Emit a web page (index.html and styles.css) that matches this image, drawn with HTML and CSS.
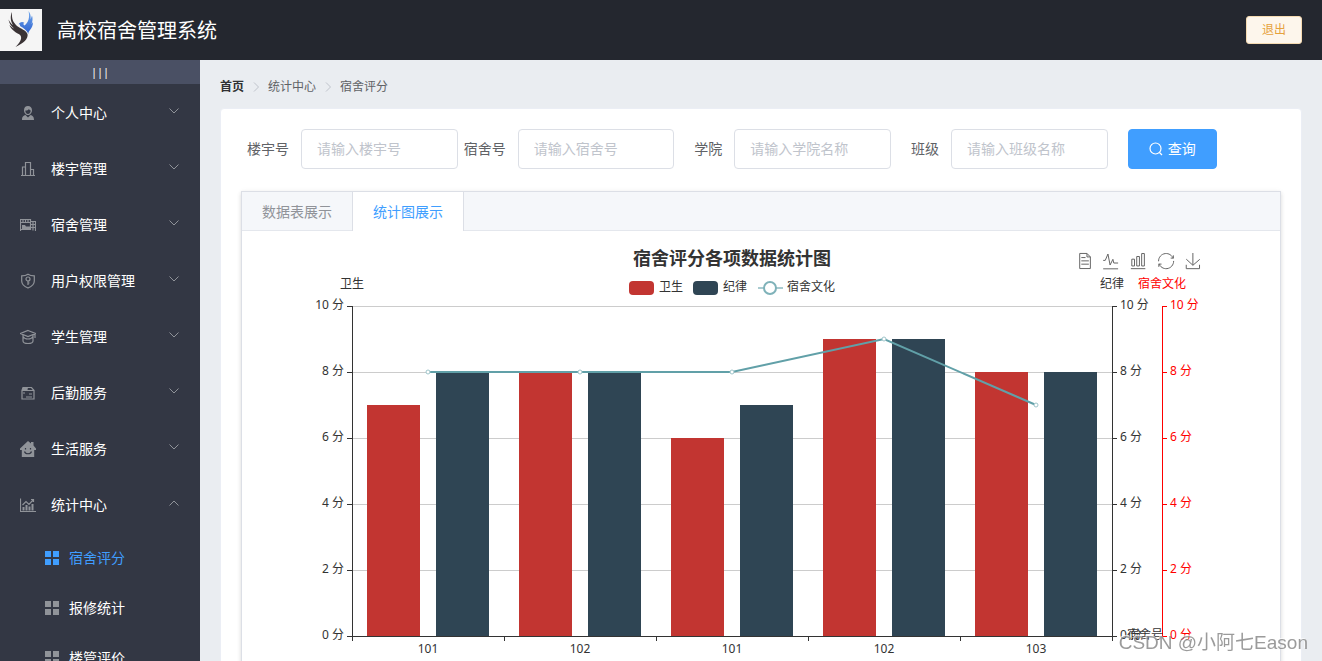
FILE: index.html
```
<!DOCTYPE html>
<html lang="zh-CN">
<head>
<meta charset="utf-8">
<title>高校宿舍管理系统</title>
<link rel="stylesheet" href="styles.css">
</head>
<body>
<svg class="defs" aria-hidden="true">
  <symbol id="down" viewBox="0 0 12 12"><path d="M1.500 3.500 6 8l4.500-4.500"/></symbol>
  <symbol id="grid" viewBox="0 0 16 16"><path d="M1 1h6v6H1zM9 1h6v6H9zM1 9h6v6H1zM9 9h6v6H9z"/></symbol>
</svg>
<div class="app">
  <header class="header">
    <div class="brand">
      <svg class="logo" viewBox="0 0 42 42" aria-hidden="true">
        <defs>
          <linearGradient id="blue" x1="0" y1="0" x2="0" y2="1"><stop offset="0" stop-color="#6ea6ec"/><stop offset="1" stop-color="#2f62cf"/></linearGradient>
        </defs>
        <rect width="42" height="42" fill="#f5f5f5"/>
        <path fill="#3a3335" d="M12 3c-.5 7 1 10 5 14 4 3 9 4 10.500 8 1 5-4 9-12 13 4-4 7-8 5-11.500-1.500-2-4-2-6.500-4.500-2.500-2-4-4-4.500-6 2 2 3 3 4.500 3.500C11 17 9 14 8.500 10.500c1.500 3 3 4.500 4.500 5.500C10.500 12.500 10 7 12 3z"/>
        <path fill="url(#blue)" d="M28.500 2c2 3 2.500 5 2 8.500l1.500-4c1 3 .5 6-.5 8.500l1.500-2c0 4-1.500 6-3 8-1 1.500-2 2.500-1.500 4-2-4-5-6-8.500-8 .5-1.500-1-2-1.500-1.500 1-2.500 4-3.500 6-1.500-1.500 0-1.500 1.500 0 2.500C28.500 13.500 30 8 28.500 2z"/>
      </svg>
      <span>高校宿舍管理系统</span>
    </div>
    <button class="logout" type="button">退出</button>
  </header>
  <div class="body">
    <aside class="sidebar">
      <button class="toggle" type="button">|||</button>
      <nav class="menu">
        <a class="item" href="#"><svg class="icon" viewBox="0 0 16 16"><path class="solid" d="M8 1c2.500 0 4 1.700 4 4.200S10.200 10 8 10 4 7.800 4 5.200 5.500 1 8 1zM2 15c0-3.500 1.500-4.500 3.500-5L8 12.500l2.500-2.500c2 .5 3.500 1.500 3.500 5z"/><path class="cut" d="M5.300 5.500c2 0 3-.5 3.600-1.500.4.900 1 1.400 1.800 1.500C10.600 7.500 9.500 9 8 9S5.300 7.500 5.300 5.500z"/></svg><span>个人中心</span><svg class="arrow"><use href="#down"/></svg></a>
        <a class="item" href="#"><svg class="icon" viewBox="0 0 16 16"><path d="M1 14.500h14M2.500 14V6h3M5.500 14V1.500h5v12.500M10.500 8.500h3V14"/></svg><span>楼宇管理</span><svg class="arrow"><use href="#down"/></svg></a>
        <a class="item" href="#"><svg class="icon" viewBox="0 0 16 16"><path d="M.5 14V2.500h10V12.500H.5M.5 5.500h10M3 2.500v3M5.500 2.500v3M8 2.500v3M10.500 4.500h5V14M10.500 7.500h5M10.500 10.500h5M13 4.500v9"/><path class="solid" d="M2 8h3l1 1.500h4V12H2z"/></svg><span>宿舍管理</span><svg class="arrow"><use href="#down"/></svg></a>
        <a class="item" href="#"><svg class="icon" viewBox="0 0 16 16"><path d="M8 1.200c2 1.300 4 1.600 6.300 1.600V8c0 3.500-2.500 5.500-6.300 7-3.800-1.500-6.300-3.500-6.300-7V2.800C4 2.800 6 2.500 8 1.200z"/><circle cx="8" cy="6" r="2"/><path d="M8 8v4M8 10h1.500"/></svg><span>用户权限管理</span><svg class="arrow"><use href="#down"/></svg></a>
        <a class="item" href="#"><svg class="icon" viewBox="0 0 16 16"><path d="M8 1.500 15.500 4.500 8 7.500.5 4.500zM3 6v6c0 1.500 2 2.500 5 2.500s5-1 5-2.500V6M3 7.500c1 2 3 2.500 5 2.500s4-.5 5-2.500M15 5v4"/></svg><span>学生管理</span><svg class="arrow"><use href="#down"/></svg></a>
        <a class="item" href="#"><svg class="icon" viewBox="0 0 16 16"><path d="M2 5.500h12v8.500H2zM2 5.500l1-3h8.500l2.500 3M3 8h2M9 9h3M6 12h6"/><path class="solid" d="M3 2.500h5L7.500 5H2z"/></svg><span>后勤服务</span><svg class="arrow"><use href="#down"/></svg></a>
        <a class="item" href="#"><svg class="icon" viewBox="0 0 16 16"><path class="solid" d="M8 0l3 2.500V1h2.500v3.500L16 7.500V9h-1.800v7H1.800V9H0V7.500z"/><path class="smile" d="M5.500 7v1.500M10.500 7v1.500M4.500 10.500c1 3 6 3 7 0"/></svg><span>生活服务</span><svg class="arrow"><use href="#down"/></svg></a>
        <a class="item" href="#"><svg class="icon" viewBox="0 0 16 16"><path d="M.5 1.500v13H16M2.500 8 6 4.500l3 3L13.500 2.500M11 2.500h2.500V5"/><path class="solid" d="M2.500 10h2v3.500h-2zM5.500 8h2v5.500h-2zM8.500 9.500h2v4h-2zM11.500 7h2v6.500h-2z"/></svg><span>统计中心</span><svg class="arrow up"><use href="#down"/></svg></a>
        <div class="submenu">
          <a class="subitem active" href="#"><svg class="gridicon"><use href="#grid"/></svg><span>宿舍评分</span></a>
          <a class="subitem" href="#"><svg class="gridicon"><use href="#grid"/></svg><span>报修统计</span></a>
          <a class="subitem" href="#"><svg class="gridicon"><use href="#grid"/></svg><span>楼管评价</span></a>
        </div>
      </nav>
    </aside>
    <main class="main">
      <nav class="crumbs">
        <a class="home" href="#">首页</a>
        <svg class="sep" viewBox="0 0 12 12"><path d="M4 1.500 8.500 6 4 10.500"/></svg>
        <span>统计中心</span>
        <svg class="sep" viewBox="0 0 12 12"><path d="M4 1.500 8.500 6 4 10.500"/></svg>
        <span>宿舍评分</span>
      </nav>
      <section class="card">
        <form class="search">
          <div class="field"><label for="building">楼宇号</label><input id="building" type="text" placeholder="请输入楼宇号"></div>
          <div class="field"><label for="room">宿舍号</label><input id="room" type="text" placeholder="请输入宿舍号"></div>
          <div class="field"><label for="college">学院</label><input id="college" type="text" placeholder="请输入学院名称"></div>
          <div class="field"><label for="class">班级</label><input id="class" type="text" placeholder="请输入班级名称"></div>
          <div class="action"><button class="query" type="button"><svg viewBox="0 0 14 14"><circle cx="6.500" cy="6.500" r="5.500"/><path d="M10.500 10.500 13 13"/></svg><span>查询</span></button></div>
        </form>
        <div class="tabs">
          <div class="tablist" role="tablist">
            <button class="tab" type="button" role="tab">数据表展示</button>
            <button class="tab current" type="button" role="tab" aria-selected="true">统计图展示</button>
          </div>
          <svg class="chart" viewBox="0 0 1038 450" role="img" aria-label="宿舍评分各项数据统计图">
            <text class="title" x="490" y="34">宿舍评分各项数据统计图</text>
            <rect class="red" x="387" y="50" width="25" height="14" rx="4"/>
            <text x="417" y="60">卫生</text>
            <rect class="navy" x="451" y="50" width="25" height="14" rx="4"/>
            <text x="481" y="60">纪律</text>
            <path class="legendline" d="M516 57h25"/><circle class="legenddot" cx="528" cy="57" r="6"/>
            <text x="545" y="60">宿舍文化</text>
            <g class="tools">
              <path transform="translate(834.600 21.900) scale(.27)" d="M17.500 17.300H33M45.400 29.500h-28M11.500 2v56H51V14.800L38.400 2H11.500zM38.400 2.200v12.700H51M45.400 41.700h-28"/>
              <path transform="translate(860 21) scale(.29)" d="M4.100 28.900h7.100l9.300-22 7.400 38 9.700-19.700 3 12.800h14.900M4.100 58h51.400"/>
              <path transform="translate(888 22) scale(.27)" d="M6.700 22.900h10V48h-10zM24.900 13h10v35h-10zM43.200 2h10v46h-10zM3.100 58h53.700"/>
              <path transform="translate(916 22) scale(.27)" d="M47 18.900h9.800V8.700M56.300 20.100C52.100 9 40.500.6 26.800 2.100 12.600 3.700 1.600 16.200 2.100 30.600M13 41.100H3.100v10.200M3.700 39.900c4.200 11.100 15.800 19.500 29.500 18 14.200-1.600 25.200-14.100 24.700-28.500"/>
              <path transform="translate(943 22) scale(.27)" d="M4.700 22.900 29.300 45.500 54.700 23.400M4.600 43.600V58h49.200V43.600M29.200 45.100V0"/>
            </g>
            <path class="gridlines" d="M111 75.500h759M111 141.500h759M111 207.500h759M111 273.500h759M111 339.500h759"/>
            <path class="red" d="M125 174h53v231h-53zM277 141h53v264h-53zM429 207h53v198h-53zM581 108h53v297h-53zM733 141h53v264h-53z"/>
            <path class="navy" d="M194 141h53v264h-53zM346 141h53v264h-53zM498 174h53v231h-53zM650 108h53v297h-53zM802 141h53v264h-53z"/>
            <path class="axis" d="M110.500 75v335M870.500 75v335M105 405.500h770M105 75.500h5M105 141.500h5M105 207.500h5M105 273.500h5M105 339.500h5M870 75.500h5M870 141.500h5M870 207.500h5M870 273.500h5M870 339.500h5M262.500 405v5M414.500 405v5M566.500 405v5M718.500 405v5"/>
            <path class="axis redaxis" d="M920.500 75v331M920 75.500h5M920 141.500h5M920 207.500h5M920 273.500h5M920 339.500h5M920 405.500h5"/>
            <path class="trend" d="M186 141h304l152-33 152 66"/>
            <g class="dots"><circle cx="186" cy="141" r="2"/><circle cx="338" cy="141" r="2"/><circle cx="490" cy="141" r="2"/><circle cx="642" cy="108" r="2"/><circle cx="794" cy="174" r="2"/></g>
            <g class="end"><text x="102" y="78">10 分</text><text x="102" y="144">8 分</text><text x="102" y="210">6 分</text><text x="102" y="276">4 分</text><text x="102" y="342">2 分</text><text x="102" y="408">0 分</text></g>
            <g><text x="878" y="78">10 分</text><text x="878" y="144">8 分</text><text x="878" y="210">6 分</text><text x="878" y="276">4 分</text><text x="878" y="342">2 分</text><text x="878" y="408">0 分</text><text x="885" y="408">宿舍号</text></g>
            <g class="redtext"><text x="928" y="78">10 分</text><text x="928" y="144">8 分</text><text x="928" y="210">6 分</text><text x="928" y="276">4 分</text><text x="928" y="342">2 分</text><text x="928" y="408">0 分</text></g>
            <g class="mid"><text x="110" y="57">卫生</text><text x="870" y="57">纪律</text><text class="redtext" x="920" y="57">宿舍文化</text><text x="186" y="422">101</text><text x="338" y="422">102</text><text x="490" y="422">101</text><text x="642" y="422">102</text><text x="794" y="422">103</text></g>
          </svg>
        </div>
      </section>
    </main>
  </div>
  <div class="watermark">CSDN @小阿七Eason</div>
</div>
</body>
</html>
```
FILE: styles.css
```
* { box-sizing: border-box; }
body { margin: 0; font-family: "Noto Sans", "Noto Sans CJK SC", sans-serif; font-size: 14px; color: #606266; }
a { color: inherit; text-decoration: none; }
button, input { font: inherit; }
svg { fill: none; stroke: currentColor; }
.defs { position: absolute; width: 0; height: 0; }
.app { display: flex; flex-direction: column; height: 100vh; overflow: hidden; }
.header { display: flex; flex: none; align-items: center; justify-content: space-between; height: 60px; padding-right: 20px; background: #24272f; }
.brand { display: flex; align-items: center; gap: 15px; font-size: 20px; line-height: 28px; color: #fff; }
.brand span { padding-top: 2px; }
.logo { width: 42px; height: 42px; stroke: none; }
.logout { height: 28px; padding: 0 15px; border: 1px solid #f5dab1; border-radius: 3px; background: #fdf6ec; color: #e6a23c; font-size: 12px; line-height: 26px; }
.body { display: flex; flex: 1; min-height: 0; }
.sidebar { flex: none; width: 200px; overflow: hidden; background: #333744; color: #fff; }
.toggle { display: block; width: 100%; height: 24px; padding: 0; border: 0; background: #4a5064; color: #fff; font-size: 11px; line-height: 24px; }
.item { display: flex; align-items: center; height: 56px; padding: 2px 20px 0; line-height: 20px; }
.item span { flex: 1; margin-left: 15px; }
.icon { width: 16px; height: 16px; color: #909399; stroke-width: 1.2; }
.solid { fill: #909399; stroke: none; }
.cut { fill: #333744; stroke: none; }
.smile { stroke: #333744; }
.arrow { width: 12px; height: 12px; margin-bottom: 5px; color: #909399; }
.up { transform: rotate(180deg); }
.subitem { display: flex; align-items: center; gap: 9px; height: 50px; padding-left: 44px; line-height: 20px; }
.submenu { padding-top: 1px; }
.gridicon { width: 16px; height: 16px; fill: #909399; stroke: none; }
.active { color: #409eff; }
.active .gridicon { fill: #409eff; }
.main { flex: 1; min-width: 0; padding: 20px; overflow: auto; scrollbar-width: none; background: #eaedf1; }
.crumbs { display: flex; align-items: center; gap: 6px; height: 13px; margin-bottom: 15px; font-size: 12px; line-height: 13px; }
.home { font-weight: 700; color: #303133; }
.sep { width: 12px; height: 12px; color: #c0c4cc; }
.card { padding: 20px; border: 1px solid #ebeef5; border-radius: 4px; background: #fff; }
.search { display: grid; grid-template-columns: repeat(4, 5fr) 4fr; margin-bottom: 22px; }
.field { display: flex; align-items: center; min-width: 0; }
.field label { flex: none; width: 60px; padding-right: 12px; text-align: right; line-height: 40px; }
.field input { flex: 1; min-width: 0; height: 40px; padding: 0 15px 2px; border: 1px solid #dcdfe6; border-radius: 4px; background: #fff; color: #606266; outline: 0; }
.field input::placeholder { color: #c0c4cc; opacity: 1; }
.action { padding-left: 20px; }
.query { display: flex; align-items: center; gap: 5px; height: 40px; padding: 0 20px; border: 1px solid #409eff; border-radius: 4px; background: #409eff; color: #fff; line-height: 20px; }
.query svg { width: 14px; height: 14px; stroke-width: 1.2; }
.tabs { border: 1px solid #dcdfe6; background: #fff; box-shadow: 0 2px 4px rgba(0, 0, 0, .12), 0 0 6px rgba(0, 0, 0, .04); }
.tablist { display: flex; height: 39px; background: #f5f7fa; box-shadow: inset 0 -1px #e4e7ed; }
.tab { padding: 0 20px; border: 0; background: none; color: #909399; line-height: 38px; }
.current { border: solid #dcdfe6; border-width: 0 1px; background: #fff; color: #409eff; }
.chart { display: block; width: 100%; height: auto; font-size: 12px; }
.chart text { fill: #333; stroke: none; }
.chart .title { font-size: 18px; font-weight: 700; text-anchor: middle; }
.chart .redtext, .chart .redtext text { fill: #f00; }
.red { fill: #c23531; stroke: none; }
.navy { fill: #2f4554; stroke: none; }
.gridlines { stroke: #ccc; }
.axis { stroke: #333; }
.chart .redaxis { stroke: #f00; }
.trend { stroke: #61a0a8; stroke-width: 2; }
.dots { fill: #fff; stroke: #9fc5ca; }
.legendline { stroke: #a9cbd0; stroke-width: 2; }
.legenddot { fill: #fff; stroke: #7fb2b9; stroke-width: 2; }
.tools path { stroke: #666; vector-effect: non-scaling-stroke; }
.end text { text-anchor: end; }
.mid text { text-anchor: middle; }
.watermark { position: fixed; right: 14px; bottom: 4px; font: 19px/28px "Liberation Sans", "Noto Sans CJK SC", sans-serif; color: rgba(130, 130, 130, .8); text-shadow: -1px -1px rgba(255, 255, 255, .7); }
```
